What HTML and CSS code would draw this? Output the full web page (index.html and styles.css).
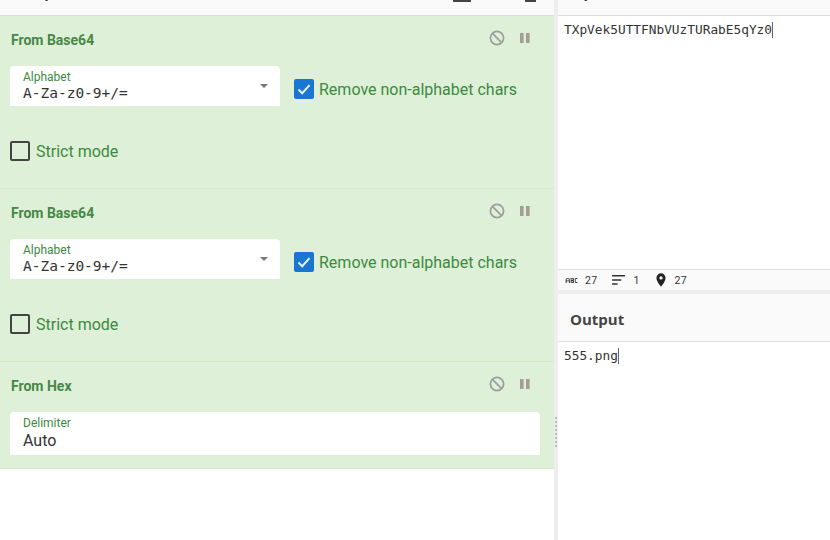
FILE: index.html
```html
<!DOCTYPE html>
<html lang="en">
<head>
<meta charset="utf-8">
<title>CyberChef</title>
<link rel="stylesheet" href="styles.css">
</head>
<body>
<div class="app">
  <section class="recipe">
    <header class="top-head">
      <span class="top-title">Recipe</span>
      <span class="top-stubs"><i class="stub stub-wide"></i><i class="stub"></i></span>
    </header>
    <article class="op">
      <div class="op-head"><h2 class="op-title">From Base64</h2>
        <span class="op-icons">
          <svg class="ico" viewBox="0 0 16 16"><circle cx="8" cy="8" r="6.6"/><path d="M3.4 3.4l9.2 9.2"/></svg>
          <svg class="ico-pause" viewBox="0 0 10 10"><path d="M0 0h3.6v10H0zM6 0h3.6v10H6z"/></svg>
        </span></div>
      <div class="row">
        <div class="field field-half"><span class="field-label">Alphabet</span><span class="field-value mono">A-Za-z0-9+/=</span><i class="caret-down"></i></div>
        <label class="check check-shift"><span class="box box-on"><svg viewBox="0 0 20 20"><path d="M4.5 10.5l3.7 3.7 7.3-8"/></svg></span>Remove non-alphabet chars</label>
      </div>
      <div class="row-strict"><label class="check check-strict"><span class="box"></span>Strict mode</label></div>
    </article>
    <article class="op">
      <div class="op-head"><h2 class="op-title">From Base64</h2>
        <span class="op-icons">
          <svg class="ico" viewBox="0 0 16 16"><circle cx="8" cy="8" r="6.6"/><path d="M3.4 3.4l9.2 9.2"/></svg>
          <svg class="ico-pause" viewBox="0 0 10 10"><path d="M0 0h3.6v10H0zM6 0h3.6v10H6z"/></svg>
        </span></div>
      <div class="row">
        <div class="field field-half"><span class="field-label">Alphabet</span><span class="field-value mono">A-Za-z0-9+/=</span><i class="caret-down"></i></div>
        <label class="check check-shift"><span class="box box-on"><svg viewBox="0 0 20 20"><path d="M4.5 10.5l3.7 3.7 7.3-8"/></svg></span>Remove non-alphabet chars</label>
      </div>
      <div class="row-strict"><label class="check check-strict"><span class="box"></span>Strict mode</label></div>
    </article>
    <article class="op op-last">
      <div class="op-head"><h2 class="op-title">From Hex</h2>
        <span class="op-icons">
          <svg class="ico" viewBox="0 0 16 16"><circle cx="8" cy="8" r="6.6"/><path d="M3.4 3.4l9.2 9.2"/></svg>
          <svg class="ico-pause" viewBox="0 0 10 10"><path d="M0 0h3.6v10H0zM6 0h3.6v10H6z"/></svg>
        </span></div>
      <div class="field field-full"><span class="field-label">Delimiter</span><span class="field-value">Auto</span></div>
    </article>
  </section>
  <div class="gutter"><i class="grip"></i></div>
  <section class="io">
    <div class="io-input">
      <header class="top-head top-head-io"><span class="top-title">Input</span></header>
      <div class="text mono">TXpVek5UTTFNbVUzTURabE5qYz0<i class="cursor"></i></div>
      <footer class="status">
        <span class="stat"><svg class="abc" viewBox="0 0 14 6"><path d="M0 6V1h1v-1h3v1h1v5H3.8V4H1.2v2zM1.200 3h2.600V1H1.200zM6 0h3.500v1h.5v1.500h-.5V3h.5v2.500h-.5V6H6zM7 1v1.500h1.500V1zM7 3.500V5h1.500V3.500zM11 1h.5V0H14v1.200h-2V4.800h2V6h-2.500V5H11z"/></svg>27</span>
        <span class="stat stat-lines"><svg class="lines" viewBox="0 0 14 12"><path d="M0 0h14v1.700H0zM0 4.500h10v1.700H0zM0 9h6v1.700H0z"/></svg>1</span>
        <span class="stat stat-pin"><svg class="pin" viewBox="0 0 12 16"><path fill-rule="evenodd" d="M6 0a5.500 5.500 0 0 1 5.500 5.500C11.500 9.500 6 16 6 16S.5 9.500.5 5.500A5.500 5.500 0 0 1 6 0zm0 3.500a2 2 0 1 0 0 4 2 2 0 0 0 0-4z"/></svg>27</span>
      </footer>
    </div>
    <div class="io-gutter"></div>
    <div class="io-output">
      <header class="out-head"><h2 class="out-title">Output</h2></header>
      <div class="text mono">555.png<i class="cursor cursor-out"></i></div>
    </div>
  </section>
</div>
</body>
</html>
```
FILE: styles.css
```css
* { box-sizing: border-box; }
html, body { margin: 0; height: 100%; overflow: hidden; background: #fff; }
body { font-family: Roboto, "Noto Sans", sans-serif; color: #333; }
.app { display: grid; grid-template-columns: 554px 4px 1fr; height: 540px; }
.mono { font-family: "DejaVu Sans Mono", "Liberation Mono", monospace; }

.top-head { height: 16px; background: #fafafa; border-bottom: 1px solid #ddd; overflow: hidden; display: flex; justify-content: space-between; align-items: flex-end; padding: 0 18px 0 13px; }
.top-title { font-size: 16px; font-weight: 700; line-height: 16px; margin-bottom: 14px; color: #333; }
.top-stubs { display: flex; gap: 54px; align-self: flex-start; }
.stub { display: block; width: 11px; height: 2px; background: #444; }
.stub-wide { width: 18px; }

.op { height: 173px; background: #dff0d8; border-bottom: 1px solid #d6e9c6; padding: 0 14px 0 10px; color: #3c8a3f; }
.op-last { height: 107px; }
.op-head { height: 50px; display: flex; justify-content: space-between; align-items: center; padding: 0 10px 0 1px; }
.op-title { margin: 0; font-size: 14px; font-weight: 700; color: #468847; transform: translateY(-1px); }
.op-icons { display: flex; align-items: center; gap: 15px; transform: translateY(-3px); }
.ico { width: 16px; height: 16px; fill: none; stroke: #9d9d9d; stroke-width: 1.700; }
.ico-pause { width: 10px; height: 10px; fill: #a39d94; }

.row { display: flex; align-items: center; gap: 14px; }
.field { position: relative; display: flex; flex-direction: column; background: #fff; border-radius: 4px 4px 0 0; padding: 4px 13px 0; }
.field-half { width: 270px; height: 40px; }
.field-full { width: 530px; height: 43px; }
.field-label { font-size: 12px; line-height: 14px; color: #3c8a3f; }
.field-value { font-size: 14.500px; line-height: 18px; color: #333; }
.field-full .field-value { font-family: Roboto, sans-serif; font-size: 16px; line-height: 21px; }
.caret-down { position: absolute; right: 12px; top: 18px; border: 4px solid transparent; border-top: 4px solid #757575; border-bottom: 0; }

.check { display: flex; align-items: center; gap: 5px; font-size: 16px; color: #3c8a3f; }
.check-shift { transform: translateY(3px); }
.check-strict { gap: 6px; }
.box { display: flex; width: 20px; height: 20px; border: 2px solid #444; border-radius: 2px; }
.box-on { background: #1976d2; border: 0; }
.box-on svg { width: 20px; height: 20px; fill: none; stroke: #e8f2ee; stroke-width: 2; }
.row-strict { margin-top: 35px; }

.gutter { background: #eee; position: relative; }
.grip { position: absolute; left: 1px; top: 417px; width: 2px; height: 30px; background: repeating-linear-gradient(#bbb 0 2px, transparent 2px 4px); }

.io { display: flex; flex-direction: column; min-width: 0; }
.io-input { height: 290px; display: flex; flex-direction: column; }
.top-head-io { padding-left: 12px; }
.text { flex: 1; font-size: 12.800px; line-height: 16px; padding: 6px 6px; color: #333; white-space: pre; }
.cursor { display: inline-block; width: 1px; height: 16px; background: #666; vertical-align: top; }
.status { height: 21px; background: #fafafa; border-top: 1px solid #ddd; display: flex; align-items: center; padding: 0 0 0 7px; font-size: 10.500px; color: #333; letter-spacing: .3px; }
.stat { display: flex; align-items: center; gap: 7px; }
.stat-lines { margin-left: 15px; gap: 8px; }
.stat-pin { margin-left: 16px; gap: 9px; }
.abc { width: 13px; height: 5px; fill: #333; }
.lines { width: 13px; height: 11px; fill: #333; }
.pin { width: 10px; height: 14px; fill: #222; }
.io-gutter { height: 4px; background: #eee; }
.io-output { flex: 1; display: flex; flex-direction: column; }
.out-head { height: 48px; background: #fafafa; border-bottom: 1px solid #ddd; display: flex; align-items: center; padding: 3px 12px 0; }
.out-title { margin: 0; font-size: 15px; font-weight: 700; color: #444; font-family: "Open Sans", Roboto, sans-serif; }
```
